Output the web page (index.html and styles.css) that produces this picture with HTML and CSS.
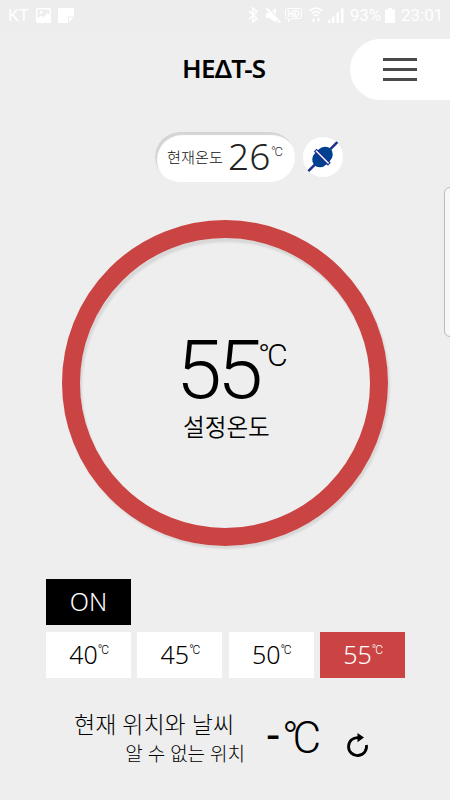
FILE: index.html
```html
<!DOCTYPE html>
<html lang="ko">
<head>
    <meta charset="UTF-8">
    <meta name="viewport" content="width=device-width, initial-scale=1.0">
    <title>HEAT-S</title>
    <link rel="stylesheet" href="styles.css">
</head>
<body>

    <div class="screen">
        <div class="status-bar">
            <span class="carrier">KT</span>
            <svg class="icon-picture" width="15" height="15" viewBox="0 0 15 15">
                <path fill="#fff" fill-rule="evenodd" d="M1.500 0h12a1.500 1.500 0 0 1 1.500 1.500v12a1.500 1.500 0 0 1-1.500 1.500h-12a1.500 1.500 0 0 1-1.500-1.500v-12A1.500 1.500 0 0 1 1.500 0zM1.500 1.500v9l3.500-3 2.500 2 4-4.500 2 2V1.500z"/>
                <circle cx="5" cy="4.500" r="1.500" fill="#fff"/>
            </svg>
            <svg class="icon-note" width="16" height="15" viewBox="0 0 16 15">
                <path fill="#fff" d="M0 0h16v8.500h-6V15H0zM11 9.500h4.500L11 14.500z"/>
            </svg>

            <div class="status-right">
                <svg class="icon-bluetooth" width="11" height="16" viewBox="0 0 11 16">
                    <path fill="none" stroke="#fff" stroke-width="1.500" d="M1 4l8 7.500-4 3.500V1l4 3.500L1 12"/>
                </svg>
                <svg class="icon-mute" width="15" height="15" viewBox="0 0 15 15">
                    <path fill="#fff" d="M0 5h3l7-5v14.500L3 10H0z"/>
                    <path stroke="#eee" stroke-width="1.500" d="M2 0l13 12.500"/>
                    <path stroke="#fff" stroke-width="2" d="M.5.500l13.500 14"/>
                </svg>
                <svg class="icon-hd" width="17" height="14" viewBox="0 0 17 14">
                    <path fill="none" stroke="#fff" d="M2.500.500h12a2 2 0 0 1 2 2v6a2 2 0 0 1-2 2h-8l-3 3v-3h-1a2 2 0 0 1-2-2v-6a2 2 0 0 1 2-2z"/>
                    <text x="2.500" y="9" class="hd-text">HD</text>
                </svg>
                <svg class="icon-wifi" width="14" height="16" viewBox="0 0 14 16">
                    <path fill="none" stroke="#fff" stroke-width="1.600" d="M.5 4q6.500-6 13 0M2.700 6.500q4.300-4 8.600 0M4.800 8.800q2.200-2 4.400 0"/>
                    <path fill="#fff" d="M4.500 15.500L2.500 13h1.300v-2h1.400v2h1.300zM9.500 10.500l2 2.500h-1.300v2H8.800v-2H7.500z"/>
                </svg>
                <svg class="icon-signal" width="16" height="16" viewBox="0 0 16 16">
                    <path fill="#fff" d="M0 14l2.500-2.500V16H0zM4 10.500l2.500-2V16H4zM8.500 6.500L11 4v12H8.500zM13 2l2.500-2v16H13z"/>
                </svg>
                <span class="battery-level">93%</span>
                <svg class="icon-battery" width="10" height="15" viewBox="0 0 10 15">
                    <path fill="#fff" d="M3 0h4v1.500h3V15H0V1.500h3z"/>
                </svg>
                <span class="clock">23:01</span>
            </div>
        </div>

        <header class="header">
            <h1 class="logo">HEΔT-S</h1>
            <button class="menu-btn">
                <span class="menu-line"></span>
                <span class="menu-line"></span>
                <span class="menu-line"></span>
            </button>
        </header>

        <div class="current">
            <div class="current-temp">
                <span class="current-label">현재온도</span>
                <span class="current-value">26</span>
                <span class="unit current-unit">°C</span>
            </div>
            <div class="plug">
                <svg width="40" height="40" viewBox="0 0 40 40">
                    <g transform="translate(19.500 20) rotate(-45)">
                        <path stroke="#1c3094" stroke-width="2.500" d="M-20 0H21"/>
                        <rect x="-11.500" y="-8" width="23" height="16" rx="9" ry="8" fill="#00418f"/>
                        <path stroke="#1c3094" stroke-width="4" d="M-.3-10v20"/>
                        <path stroke="#fff" stroke-width="1.400" d="M-.3-9v18"/>
                    </g>
                </svg>
            </div>
        </div>

        <div class="dial-wrap">
            <div class="dial">
                <div class="dial-temp">
                    <span class="dial-value">55</span>
                    <span class="unit dial-unit">°C</span>
                </div>
                <div class="dial-label">설정온도</div>
            </div>
        </div>

        <div class="controls">
            <button class="btn power">ON</button>
            <div class="presets">
                <button class="btn preset">40<span class="unit preset-unit">°C</span></button>
                <button class="btn preset">45<span class="unit preset-unit">°C</span></button>
                <button class="btn preset">50<span class="unit preset-unit">°C</span></button>
                <button class="btn preset active">55<span class="unit preset-unit">°C</span></button>
            </div>
        </div>

        <div class="weather">
            <div class="weather-text">
                <div class="weather-title">현재 위치와 날씨</div>
                <div class="weather-place">알 수 없는 위치</div>
            </div>
            <span class="weather-value">-</span>
            <span class="unit weather-unit">°C</span>
            <svg class="refresh" width="22" height="25" viewBox="0 0 22 25">
                <path fill="none" stroke="#000" stroke-width="2.800" d="M11.500 4.600A9 9 0 1 0 19.400 12"/>
                <path d="M10.500 0l6.500 4.500-6.500 4.800z"/>
            </svg>
        </div>

        <div class="edge-panel"></div>
    </div>

</body>
</html>
```
FILE: styles.css
```css
body {
    margin: 0;
    background-color: #eee;
    font-family: "Noto Sans", "Noto Sans CJK KR", sans-serif;
    font-weight: 300;
    color: #000;
}

button {
    border: none;
    padding: 0;
    font: inherit;
}

svg {
    display: block;
    flex: none;
}

.screen {
    position: relative;
    width: 450px;
    height: 800px;
    overflow: hidden;
}

.unit {
    font-family: Roboto, sans-serif;
    letter-spacing: -0.1em;
    white-space: nowrap;
}

/* status bar */
.status-bar {
    display: flex;
    align-items: center;
    box-sizing: border-box;
    height: 32px;
    padding: 0 8px 2px;
    background-color: #ededed;
    color: #fff;
    font-family: Roboto, sans-serif;
    font-size: 17px;
    font-weight: 400;
}

.carrier {
    width: 28px;
}

.icon-note {
    margin-left: 7px;
}

.status-right {
    display: flex;
    align-items: center;
    margin-left: auto;
}

.icon-mute {
    margin-left: 7px;
}

.icon-hd {
    margin-left: 4px;
}

.hd-text {
    fill: #fff;
    font-size: 9px;
    font-weight: 700;
}

.icon-wifi {
    margin-left: 7px;
}

.icon-signal {
    margin-left: 5px;
}

.battery-level {
    width: 31px;
    margin-left: 6px;
    letter-spacing: -0.2px;
}

.icon-battery {
    margin: 0 6px 0 4px;
}

.clock {
    width: 41px;
}

/* header */
.header {
    display: flex;
    align-items: center;
    justify-content: space-between;
    height: 61px;
    margin-top: 7px;
    padding-left: 182px;
}

.logo {
    margin: -3px 0 0;
    font-family: "Noto Sans", sans-serif;
    font-size: 26px;
    font-weight: 600;
    letter-spacing: -0.7px;
    white-space: nowrap;
}

.menu-btn {
    display: flex;
    flex-direction: column;
    justify-content: center;
    gap: 7px;
    box-sizing: border-box;
    width: 100px;
    height: 61px;
    padding-left: 33px;
    background-color: #fff;
    border-radius: 31px 0 0 31px;
}

.menu-line {
    width: 34px;
    height: 3px;
    background-color: #4a4a4a;
}

/* current temperature */
.current {
    display: flex;
    align-items: center;
    gap: 8px;
    height: 50px;
    margin: 32px 0 0 155px;
}

.current-temp {
    display: flex;
    align-items: center;
    box-sizing: border-box;
    width: 140px;
    height: 50px;
    padding-left: 12px;
    background-color: #fff;
    border-radius: 25px;
    box-shadow: inset 2px 3px 1px #d4d4d4;
}

.current-label {
    width: 61px;
    margin-top: -2px;
    font-size: 15.2px;
    color: #111;
    white-space: nowrap;
}

.current-value {
    width: 43px;
    margin-top: -3px;
    font-size: 37px;
    line-height: 50px;
    color: #222;
}

.current-unit {
    margin-top: -11px;
    font-size: 13px;
    line-height: 12px;
    color: #333;
}

.plug {
    width: 40px;
    height: 40px;
    background-color: #fff;
    border-radius: 50%;
}

/* dial */
.dial-wrap {
    padding: 38px 0 0 62px;
}

.dial {
    box-sizing: border-box;
    width: 326px;
    height: 326px;
    padding-left: 101px;
    padding-top: 91px;
    border: 18px solid #cb4444;
    border-radius: 50%;
    box-shadow: 2px 3px 2px #d8d8d8, inset 2px 4px 2px #d8d8d8;
}

.dial-temp {
    display: flex;
    height: 85px;
}

.dial-value {
    width: 82px;
    margin-left: -5px;
    font-family: Roboto, sans-serif;
    font-size: 81px;
    line-height: 84px;
    letter-spacing: -4.5px;
    transform: scaleX(1.02);
    transform-origin: left;
}

.dial-unit {
    margin-top: 10px;
    font-size: 32px;
    line-height: 32px;
}

.dial-label {
    margin-left: 2px;
    font-size: 23.6px;
    line-height: 26px;
    font-weight: 350;
}

/* buttons */
.controls {
    display: flex;
    flex-direction: column;
    gap: 7px;
    margin: 33px 45px 0 46px;
}

.btn {
    width: 85px;
    height: 46px;
    font-size: 25px;
}

.power {
    padding-bottom: 2px;
    background-color: #000;
    color: #fff;
}

.presets {
    display: flex;
    justify-content: space-between;
}

.preset {
    display: flex;
    align-items: center;
    justify-content: center;
    box-sizing: border-box;
    padding-bottom: 3px;
    background-color: #fff;
    color: #000;
}

.preset-unit {
    margin-top: -7px;
    font-size: 12px;
    line-height: 12px;
}

.active {
    background-color: #cb4444;
    color: #fff;
}

/* weather */
.weather {
    display: flex;
    align-items: center;
    height: 60px;
    margin-top: 30px;
    padding-left: 74px;
}

.weather-text {
    width: 171px;
    white-space: nowrap;
}

.weather-title {
    font-size: 23px;
    line-height: 32px;
}

.weather-place {
    font-size: 19px;
    line-height: 28px;
    text-align: right;
}

.weather-value {
    width: 17px;
    margin: -12px 0 0 21px;
    font-size: 44px;
    line-height: 40px;
    font-weight: 400;
}

.weather-unit {
    width: 37px;
    margin: 0 0 0 -1px;
    font-size: 44px;
    line-height: 44px;
    letter-spacing: -0.14em;
}

.refresh {
    margin: 15px 0 0 28px;
}

/* handle of the side panel */
.edge-panel {
    position: absolute;
    top: 187px;
    right: -10px;
    box-sizing: border-box;
    width: 16px;
    height: 150px;
    background-color: #f8f8f8;
    border: 1px solid #bbb;
    border-radius: 6px;
}
```
